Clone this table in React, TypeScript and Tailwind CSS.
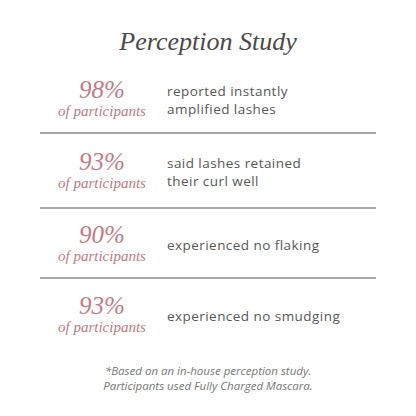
const serif = { fontFamily: '"Liberation Serif", "Times New Roman", serif' };

const rows = [
  { pct: "98%", text: ["reported instantly", "amplified lashes"], h: "h-[68px]" },
  { pct: "93%", text: ["said lashes retained", "their curl well"], h: "h-[73px]" },
  { pct: "90%", text: ["experienced no flaking"], h: "h-[68px]" },
  { pct: "93%", text: ["experienced no smudging"], h: "h-[70px]" },
];

export default function App() {
  return (
    <div className="w-[416px] h-[416px] bg-white overflow-hidden font-['Open_Sans',sans-serif]">
      <h1
        className="pt-[24px] h-[64px] text-center italic text-[26px] leading-[36px] text-[#4a4a4a]"
        style={serif}
      >
        Perception Study
      </h1>

      <div className="mx-[40px]">
        {rows.map((row, i) => (
          <div key={i}>
            <div className={`flex items-center ${row.h}`}>
              <div className="w-[124px] flex flex-col items-center text-[#c27a84] italic" style={serif}>
                <span className="text-[25px] leading-[25px]">{row.pct}</span>
                <span className="text-[15px] leading-[18px]">of participants</span>
              </div>
              <div className="pl-[3px] pt-[3px] text-[13.5px] leading-[18px] tracking-[0.45px] text-[#575757]">
                {row.text.map((t) => (
                  <div key={t}>{t}</div>
                ))}
              </div>
            </div>
            {i < rows.length - 1 && <div className="h-[2px] bg-[#a8a8a8]" />}
          </div>
        ))}
      </div>

      <div className="mt-[14px] text-center italic text-[11.5px] leading-[15px] text-[#777777]">
        <div>*Based on an in-house perception study.</div>
        <div>Participants used Fully Charged Mascara.</div>
      </div>
    </div>
  );
}
